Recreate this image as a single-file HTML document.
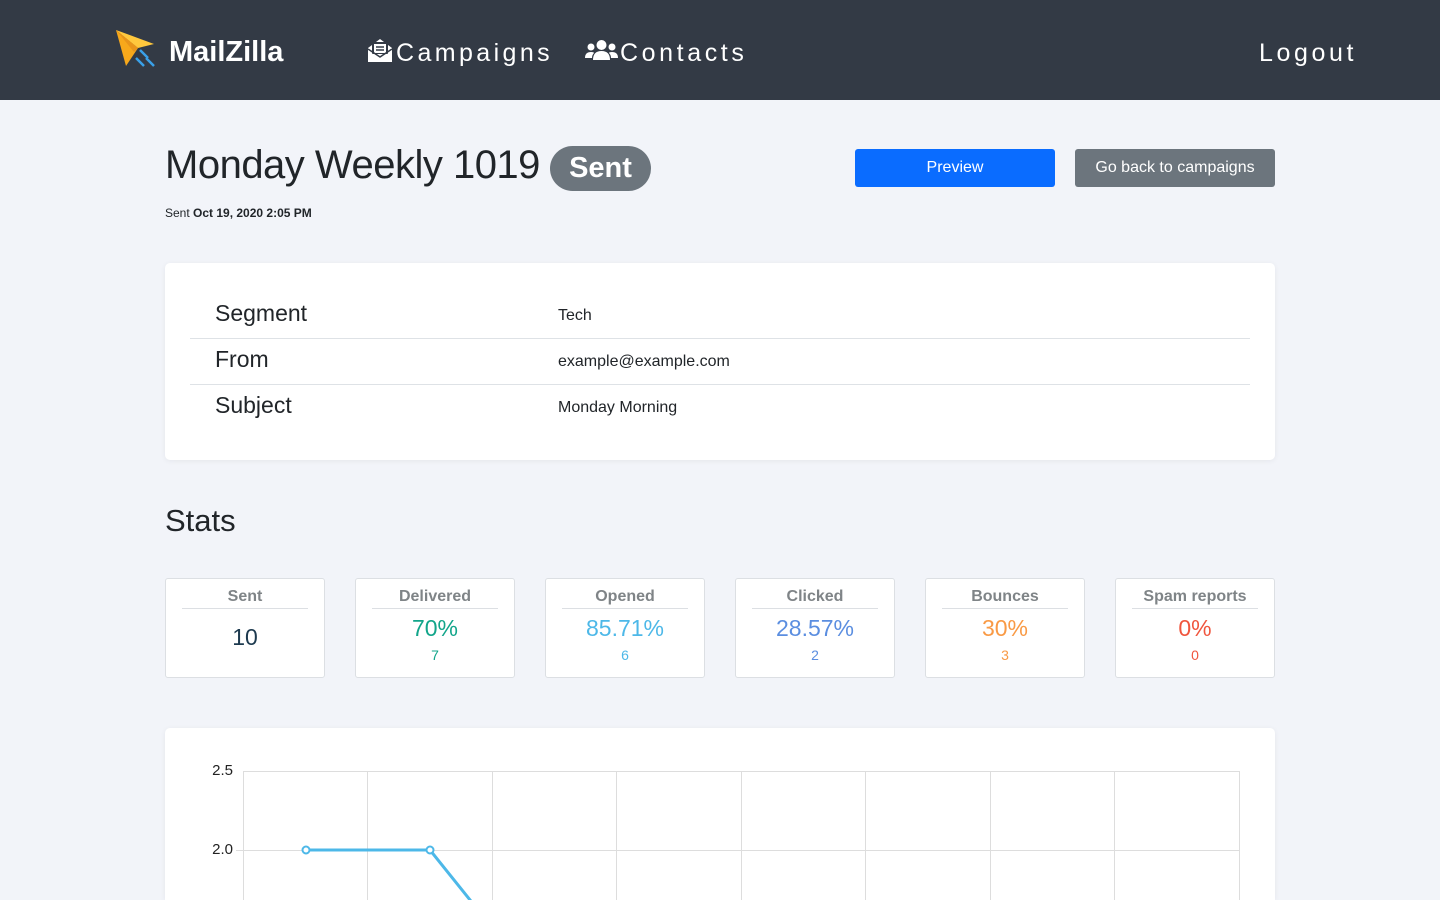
<!DOCTYPE html>
<html><head><meta charset="utf-8"><style>
*{box-sizing:border-box;margin:0;padding:0}
html,body{width:1440px;height:900px;overflow:hidden}
body{background:#f2f4f9;font-family:"Liberation Sans",sans-serif;color:#212529;position:relative}
.nav{position:absolute;left:0;top:0;width:1440px;height:100px;background:#333a45;color:#fff}
.abs{position:absolute}
.card{position:absolute;background:#fff;border-radius:5px;box-shadow:0 1px 6px rgba(0,0,0,.06)}
.stat{position:absolute;top:578px;width:160px;height:100px;background:#fff;border:1px solid #dcdfe3;border-radius:3px;text-align:center}
.stat .t{margin:8px 16px 0;border-bottom:1px solid #dcdfe3;color:#7f8487;font-size:16px;font-weight:bold;height:22px;line-height:20px}
.stat .v{font-size:23px;margin-top:7px;line-height:24px}
.stat .n{font-size:14px;margin-top:7px}
</style></head><body>
<div class="nav">
<svg class="abs" style="left:114px;top:28px" width="44" height="42" viewBox="0 0 44 42">
<path d="M2 2 L40 16 L24 20 Z" fill="#ffc83d"/><path d="M2 2 L24 20 L12 38 Z" fill="#f7a81b"/>
<path d="M2 2 L24 20 L20 24Z" fill="#e8941a"/>
<g stroke="#3aa0e8" stroke-width="2.5"><line x1="26" y1="22" x2="34" y2="30"/><line x1="22" y1="30" x2="30" y2="38"/><line x1="32" y1="30" x2="40" y2="38"/></g></svg>
<div class="abs" style="left:169px;top:36px;font-size:29px;font-weight:bold">MailZilla</div>
<svg class="abs" style="left:367px;top:38px" width="26" height="25" viewBox="0 0 26 25"><path d="M1 10 L13 1 L25 10 V24 H1Z" fill="#fff"/><rect x="5" y="4" width="16" height="12" rx="1" fill="#333a45"/><rect x="7" y="6" width="12" height="9" fill="#fff"/><line x1="9" y1="9" x2="17" y2="9" stroke="#333a45" stroke-width="1.5"/><line x1="9" y1="12" x2="17" y2="12" stroke="#333a45" stroke-width="1.5"/><path d="M1 11 L13 19 L25 11" stroke="#333a45" stroke-width="1.5" fill="none"/></svg>
<div class="abs" style="left:396px;top:39px;font-size:25px;letter-spacing:3.4px">Campaigns</div>
<svg class="abs" style="left:585px;top:39px" width="33" height="22" viewBox="0 0 33 22"><g fill="#fff"><circle cx="16.5" cy="6" r="5"/><circle cx="6" cy="8" r="3.5"/><circle cx="27" cy="8" r="3.5"/><path d="M8 21 Q8 12 16.5 12 Q25 12 25 21Z"/><path d="M0 19 Q0 13 6 13 Q9 13 9 14 Q7 16 7 19Z"/><path d="M33 19 Q33 13 27 13 Q24 13 24 14 Q26 16 26 19Z"/></g></svg>
<div class="abs" style="left:620px;top:39px;font-size:25px;letter-spacing:3.6px">Contacts</div>
<div class="abs" style="left:1259px;top:39px;font-size:25px;letter-spacing:3.6px">Logout</div>
</div>
<div class="abs" style="left:165px;top:143px;font-size:40px;letter-spacing:-0.5px">Monday Weekly 1019</div>
<div class="abs" style="left:550px;top:146px;width:101px;height:45px;border-radius:23px;background:#6c757d;color:#fff;font-size:29px;font-weight:bold;text-align:center;line-height:45px">Sent</div>
<div class="abs" style="left:165px;top:206px;font-size:12px">Sent <b>Oct 19, 2020 2:05 PM</b></div>
<div class="abs" style="left:855px;top:149px;width:200px;height:38px;background:#0a6cff;border-radius:3px;color:#fff;font-size:16px;text-align:center;line-height:38px">Preview</div>
<div class="abs" style="left:1075px;top:149px;width:200px;height:38px;background:#6c757d;border-radius:3px;color:#fff;font-size:16px;text-align:center;line-height:38px">Go back to campaigns</div>
<div class="card" style="left:165px;top:263px;width:1110px;height:197px">
<div class="abs" style="left:25px;top:75px;width:1060px;border-top:1px solid #dee2e6"></div>
<div class="abs" style="left:25px;top:121px;width:1060px;border-top:1px solid #dee2e6"></div>
<div class="abs" style="left:50px;top:37px;font-size:23px">Segment</div>
<div class="abs" style="left:50px;top:83px;font-size:23px">From</div>
<div class="abs" style="left:50px;top:129px;font-size:23px">Subject</div>
<div class="abs" style="left:393px;top:44px;font-size:16px">Tech</div>
<div class="abs" style="left:393px;top:90px;font-size:16px">example@example.com</div>
<div class="abs" style="left:393px;top:136px;font-size:16px">Monday Morning</div>
</div>
<div class="abs" style="left:165px;top:503px;font-size:31px">Stats</div>
<div class="stat" style="left:165px"><div class="t">Sent</div><div class="v" style="color:#1d3a4f;margin-top:16px">10</div></div>
<div class="stat" style="left:355px"><div class="t">Delivered</div><div class="v" style="color:#12a58a">70%</div><div class="n" style="color:#12a58a">7</div></div>
<div class="stat" style="left:545px"><div class="t">Opened</div><div class="v" style="color:#4db8e8">85.71%</div><div class="n" style="color:#4db8e8">6</div></div>
<div class="stat" style="left:735px"><div class="t">Clicked</div><div class="v" style="color:#5b8ee0">28.57%</div><div class="n" style="color:#5b8ee0">2</div></div>
<div class="stat" style="left:925px"><div class="t">Bounces</div><div class="v" style="color:#f99a45">30%</div><div class="n" style="color:#f99a45">3</div></div>
<div class="stat" style="left:1115px"><div class="t">Spam reports</div><div class="v" style="color:#f0563e">0%</div><div class="n" style="color:#f0563e">0</div></div>
<div class="card" style="left:165px;top:728px;width:1110px;height:172px;border-radius:5px 5px 0 0"></div>
<svg class="abs" style="left:0;top:0" width="1440" height="900">
<g stroke="#ddd" stroke-width="1">
<line x1="243" y1="771.5" x2="1239" y2="771.5"/><line x1="236" y1="850.5" x2="1239" y2="850.5"/>
<line x1="243.5" y1="771" x2="243.5" y2="900"/><line x1="367.5" y1="771" x2="367.5" y2="900"/><line x1="492.5" y1="771" x2="492.5" y2="900"/><line x1="616.5" y1="771" x2="616.5" y2="900"/><line x1="741.5" y1="771" x2="741.5" y2="900"/><line x1="865.5" y1="771" x2="865.5" y2="900"/><line x1="990.5" y1="771" x2="990.5" y2="900"/><line x1="1114.5" y1="771" x2="1114.5" y2="900"/><line x1="1239.5" y1="771" x2="1239.5" y2="900"/>
</g>
<text x="233" y="775" text-anchor="end" font-size="15" font-family="Liberation Sans" fill="#222">2.5</text>
<text x="233" y="854" text-anchor="end" font-size="15" font-family="Liberation Sans" fill="#222">2.0</text>
<polyline points="306,850 430,850 555,1006" fill="none" stroke="#4db8e8" stroke-width="3"/>
<circle cx="306" cy="850" r="3.5" fill="#fff" stroke="#4db8e8" stroke-width="2"/>
<circle cx="430" cy="850" r="3.5" fill="#fff" stroke="#4db8e8" stroke-width="2"/>
</svg>
</body></html>
